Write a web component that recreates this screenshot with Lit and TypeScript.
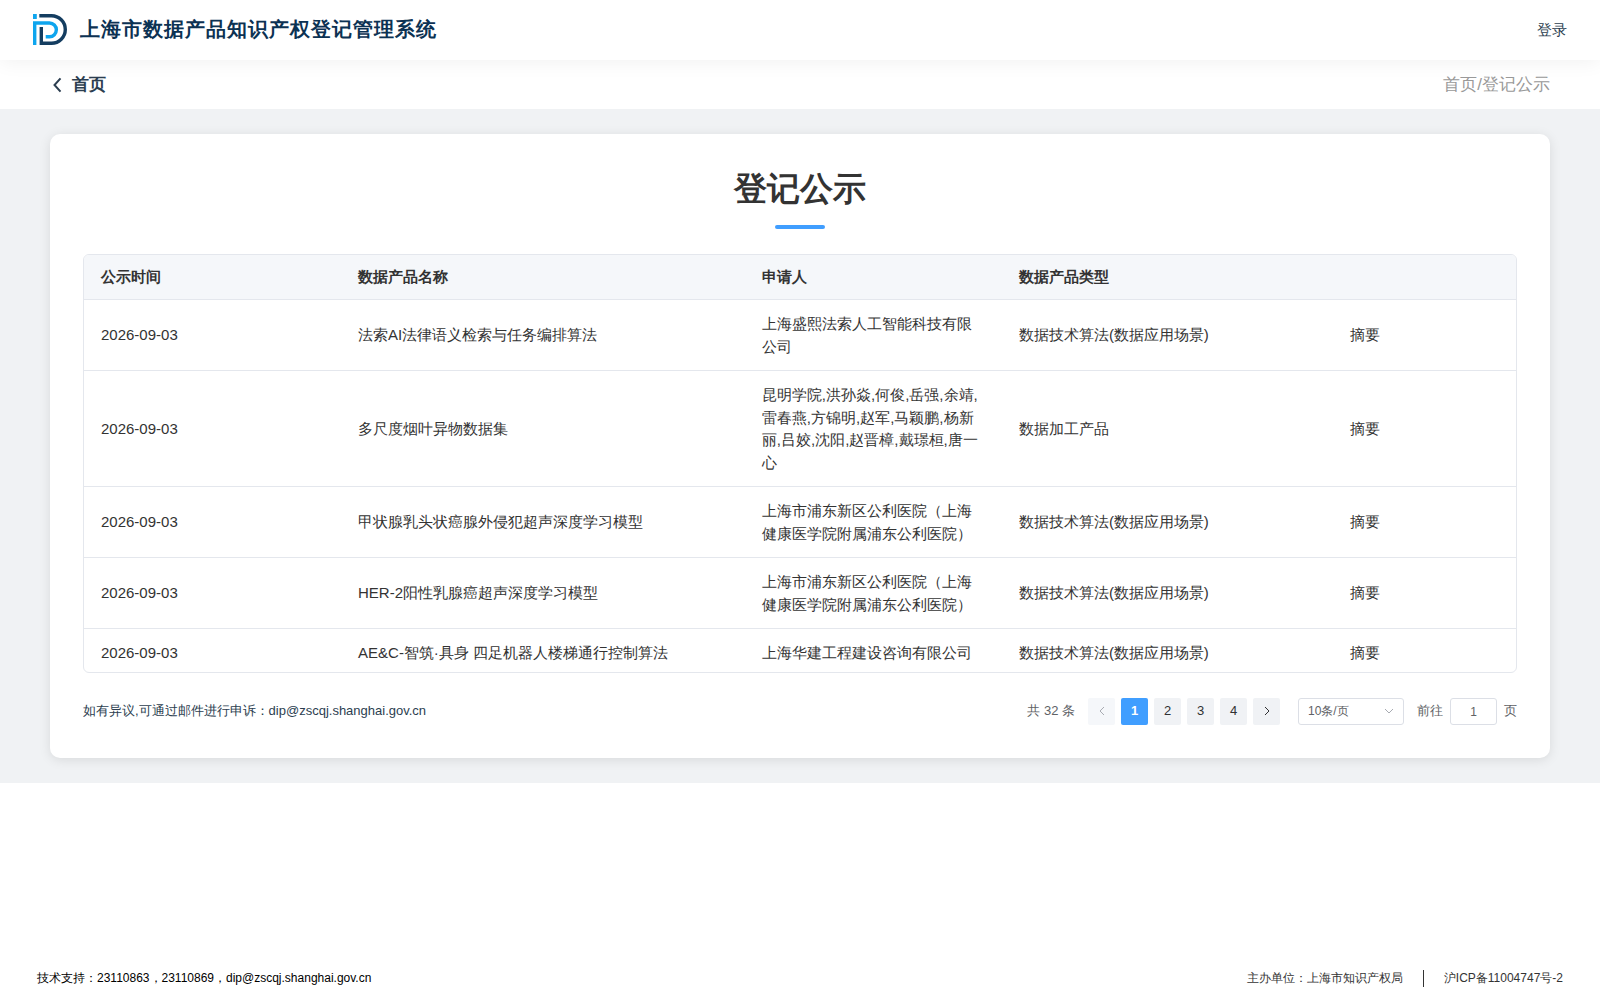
import { LitElement, html, css } from "lit";
import { customElement, state } from "lit/decorators.js";

interface Notice {
  date: string;
  name: string;
  applicant: string;
  type: string;
}

const ALGO = "数据技术算法(数据应用场景)";

const NOTICES: Notice[] = [
  { date: "2026-09-03", name: "法索AI法律语义检索与任务编排算法", applicant: "上海盛熙法索人工智能科技有限公司", type: ALGO },
  {
    date: "2026-09-03",
    name: "多尺度烟叶异物数据集",
    applicant: "昆明学院,洪孙焱,何俊,岳强,余靖,雷春燕,方锦明,赵军,马颖鹏,杨新丽,吕姣,沈阳,赵晋樟,戴璟桓,唐一心",
    type: "数据加工产品",
  },
  { date: "2026-09-03", name: "甲状腺乳头状癌腺外侵犯超声深度学习模型", applicant: "上海市浦东新区公利医院（上海健康医学院附属浦东公利医院）", type: ALGO },
  { date: "2026-09-03", name: "HER-2阳性乳腺癌超声深度学习模型", applicant: "上海市浦东新区公利医院（上海健康医学院附属浦东公利医院）", type: ALGO },
  { date: "2026-09-03", name: "AE&C-智筑·具身 四足机器人楼梯通行控制算法", applicant: "上海华建工程建设咨询有限公司", type: ALGO },
];

@customElement("app-root")
export class AppRoot extends LitElement {
  static styles = css`
    :host {
      display: flex;
      flex-direction: column;
      min-height: 100vh;
      background: #fff;
      color: #2c3e50;
      font-family: "Liberation Sans", sans-serif;
      font-size: 15px;
      line-height: 22px;
    }
    * { box-sizing: border-box; }
    a { color: inherit; text-decoration: none; }
    button, input, select { font: inherit; color: inherit; margin: 0; }
    button { border: 0; padding: 0; background: none; cursor: pointer; }
    svg { display: block; fill: none; }

    .top {
      position: relative;
      display: flex;
      align-items: center;
      justify-content: space-between;
      height: 60px;
      padding: 0 33px;
      background: #fff;
      box-shadow: 0 2px 20px rgba(0, 0, 0, 0.06);
    }
    .brand { display: flex; align-items: flex-start; gap: 13px; }
    .system {
      color: #0c3253;
      font-size: 20px;
      line-height: 30px;
      font-weight: 600;
      letter-spacing: 1px;
      white-space: nowrap;
    }
    .crumbs {
      display: flex;
      align-items: center;
      justify-content: space-between;
      height: 49px;
      padding: 0 50px;
      font-size: 17px;
    }
    .back { display: flex; align-items: center; gap: 8px; font-weight: 600; }
    .trail { color: #999; }

    .content { padding: 25px 50px; background: #f0f2f4; }
    .card {
      padding: 33px;
      border-radius: 10px;
      background: #fff;
      box-shadow: 0 2px 12px rgba(0, 0, 0, 0.1);
    }
    .heading {
      display: flex;
      flex-direction: column;
      align-items: center;
      gap: 14px;
      margin: 0 0 25px;
      color: #333;
      font-size: 33px;
      line-height: 44px;
      font-weight: 600;
    }
    .heading::after {
      content: "";
      width: 50px;
      height: 4px;
      border-radius: 2px;
      background: #409eff;
    }

    .frame {
      height: 419px;
      overflow: auto;
      scrollbar-width: none;
      border: 1px solid #e4e7ed;
      border-radius: 6px;
    }
    .grid { width: 100%; table-layout: fixed; border-collapse: separate; border-spacing: 0; color: #333; }
    .c-date, .c-person { width: 17.95%; }
    .c-name { width: 28.2%; }
    .c-type { width: 23.1%; }
    th, td { text-align: left; border-bottom: 1px solid #e4e7ed; }
    td { padding: 13px 17px 12px; line-height: 1.5; }
    th { position: sticky; top: 0; padding: 11px 17px; background: #f5f7fa; font-weight: 600; }

    .bottom {
      display: flex;
      align-items: flex-start;
      justify-content: space-between;
      margin-top: 25px;
      font-size: 13px;
      line-height: 25px;
    }
    .pager { display: flex; align-items: flex-start; color: #606266; }
    .total { margin-right: 13px; }
    .pages { display: flex; gap: 6px; margin: 0 18px 0 0; padding: 0; list-style: none; }
    .page {
      display: flex;
      align-items: center;
      justify-content: center;
      width: 27px;
      height: 27px;
      padding-bottom: 2px;
      border-radius: 2px;
      background: #f0f2f5;
      color: #303133;
    }
    .page[disabled] { background: #f5f7fa; color: #a8abb2; cursor: default; }
    .page.on { background: #409eff; color: #fff; font-weight: 700; }
    .size { display: grid; align-items: center; margin-right: 13px; }
    .size > * { grid-area: 1 / 1; }
    .size svg { justify-self: end; margin: 0 9px 2px 0; pointer-events: none; color: #a8abb2; }
    .select, .jump {
      height: 27px;
      border: 1px solid #dcdfe6;
      border-radius: 3px;
      background: #fff;
      font-size: 12px;
    }
    .select { width: 106px; padding: 0 9px 2px; appearance: none; }
    .goto { display: flex; align-items: flex-start; gap: 7px; }
    .jump { width: 47px; padding: 0; text-align: center; }

    .foot {
      display: flex;
      justify-content: space-between;
      margin-top: auto;
      padding: 0 37px 11px;
      color: #000;
      font-size: 12px;
    }
    .owner { display: flex; align-items: center; gap: 20px; color: #333; }
    .bar { width: 1px; height: 17px; background: #333; }
  `;

  @state() private current = 1;

  private chevron(points: string) {
    return html`<svg width="12" height="12" viewBox="0 0 12 12" stroke="currentColor" aria-hidden="true">
      <polyline points=${points} />
    </svg>`;
  }

  render() {
    return html`
      <header class="top">
        <div class="brand">
          <svg width="34" height="32" viewBox="0 0 34 32" aria-hidden="true">
            <g stroke="#0ea5ee" stroke-width="3.4">
              <path d="M0 2.5H3.8" stroke-width="5" />
              <path d="M1.7 31V9H16.5A6.85 6.85 0 0 1 16.5 22.7H12.7" />
            </g>
            <path d="M6.3 1.7H18.5A13.8 13.8 0 0 1 18.5 29.3H8.3V13" stroke="#143d60" stroke-width="3.4" />
          </svg>
          <span class="system">上海市数据产品知识产权登记管理系统</span>
        </div>
        <a href="#login">登录</a>
      </header>

      <nav class="crumbs">
        <a class="back" href="#home">
          <svg width="14" height="16" viewBox="0 0 14 16" stroke="currentColor" stroke-width="2" aria-hidden="true">
            <polyline points="10.5,1.4 4.5,8 10.5,14.6" />
          </svg>
          首页
        </a>
        <span class="trail"><a href="#home">首页</a>/<span>登记公示</span></span>
      </nav>

      <main class="content">
        <section class="card">
          <h1 class="heading">登记公示</h1>
          <div class="frame">
            <table class="grid">
              <colgroup>
                <col class="c-date" /><col class="c-name" /><col class="c-person" /><col class="c-type" /><col />
              </colgroup>
              <thead>
                <tr>
                  <th>公示时间</th><th>数据产品名称</th><th>申请人</th><th>数据产品类型</th><th></th>
                </tr>
              </thead>
              <tbody>
                ${NOTICES.map(
                  (n) => html`<tr>
                    <td>${n.date}</td>
                    <td>${n.name}</td>
                    <td>${n.applicant}</td>
                    <td>${n.type}</td>
                    <td><a href="#abstract">摘要</a></td>
                  </tr>`
                )}
              </tbody>
            </table>
          </div>
          <div class="bottom">
            <span>如有异议,可通过邮件进行申诉：dip@zscqj.shanghai.gov.cn</span>
            <div class="pager">
              <span class="total">共 32 条</span>
              <ul class="pages">
                <li>
                  <button class="page" aria-label="上一页" ?disabled=${this.current === 1} @click=${() => this.current--}>
                    ${this.chevron("8,2 4,6 8,10")}
                  </button>
                </li>
                ${[1, 2, 3, 4].map(
                  (p) => html`<li>
                    <button class="page ${p === this.current ? "on" : ""}" @click=${() => (this.current = p)}>${p}</button>
                  </li>`
                )}
                <li>
                  <button class="page" aria-label="下一页" ?disabled=${this.current === 4} @click=${() => this.current++}>
                    ${this.chevron("4,2 8,6 4,10")}
                  </button>
                </li>
              </ul>
              <div class="size">
                <select class="select" aria-label="每页条数">
                  <option>10条/页</option>
                </select>
                ${this.chevron("2,4 6,8 10,4")}
              </div>
              <label class="goto">前往<input class="jump" type="text" .value=${String(this.current)} />页</label>
            </div>
          </div>
        </section>
      </main>

      <footer class="foot">
        <span>技术支持：23110863，23110869，dip@zscqj.shanghai.gov.cn</span>
        <div class="owner">
          <span>主办单位：上海市知识产权局</span>
          <span class="bar"></span>
          <a href="#icp">沪ICP备11004747号-2</a>
        </div>
      </footer>
    `;
  }
}
